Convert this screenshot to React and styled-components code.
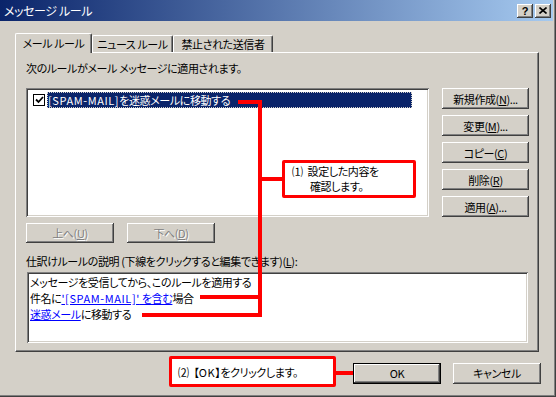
import styled, { createGlobalStyle } from "styled-components";

const GlobalStyle = createGlobalStyle`
  html, body {
    margin: 0;
    padding: 0;
    background: #d4d0c8;
  }
  body {
    font-family: "Noto Sans CJK JP", "Noto Sans", sans-serif;
    font-size: 11px;
    letter-spacing: -0.4px;
    font-feature-settings: "palt";
    color: #000;
  }
  * {
    box-sizing: border-box;
  }
`;

const raised = `
  box-shadow: inset -1px -1px #404040, inset 1px 1px #fff,
    inset -2px -2px #808080, inset 2px 2px #d4d0c8;
`;

const sunken = `
  box-shadow: inset 1px 1px #808080, inset -1px -1px #fff,
    inset 2px 2px #404040, inset -2px -2px #d4d0c8;
`;

const Window = styled.div`
  position: relative;
  width: 556px;
  height: 397px;
  background: #d4d0c8;
  padding: 0 3px 3px 0;
  box-shadow: inset -1px -1px #404040, inset -2px -2px #808080;
  display: flex;
  flex-direction: column;
  overflow: hidden;
`;

const TitleBar = styled.div`
  height: 21px;
  display: flex;
  align-items: center;
  padding: 0 2px 0 4px;
  background: linear-gradient(to right, #0a246a, #a6caf0);
  color: #fff;
  font-size: 12px;
  line-height: 14px;
`;

const TitleButtons = styled.div`
  margin-left: auto;
  display: flex;
  gap: 2px;
`;

const TitleButton = styled.div`
  width: 16px;
  height: 14px;
  background: #d4d0c8;
  ${raised}
  display: flex;
  align-items: center;
  justify-content: center;
  font-family: "Liberation Sans", sans-serif;
  font-weight: bold;
  font-size: 11px;
  letter-spacing: 0;
  line-height: 14px;
  color: #000;
`;

const Body = styled.div`
  padding: 12px 14px 0 15px;
`;

const Tabs = styled.div`
  display: flex;
  align-items: flex-end;
  height: 19px;
  position: relative;
  z-index: 1;
`;

const Tab = styled.div`
  width: ${(p) => p.$w}px;
  height: ${(p) => (p.$active ? 20 : 17)}px;
  margin-bottom: ${(p) => (p.$active ? -1 : 0)}px;
  background: #d4d0c8;
  border-top: 1px solid #fff;
  border-left: 1px solid #fff;
  border-right: 1px solid #404040;
  box-shadow: inset -1px 0 #808080;
  border-radius: 2px 2px 0 0;
  display: flex;
  align-items: center;
  justify-content: center;
  padding-bottom: ${(p) => (p.$active ? 2 : 0)}px;
  line-height: 14px;
  white-space: nowrap;
`;

const Panel = styled.div`
  height: 300px;
  border-top: 1px solid #fff;
  border-left: 1px solid #fff;
  border-right: 1px solid #404040;
  border-bottom: 1px solid #404040;
  box-shadow: inset -1px -1px #808080;
  padding: 8px 9px 0 10px;
`;

const Text = styled.div`
  line-height: 14px;
  margin-top: ${(p) => p.$mt || 0}px;
  white-space: nowrap;
`;

const Latin = styled.span`
  letter-spacing: 0.6px;
`;

const Num = styled.span`
  margin-right: 5px;
`;

const ListRow = styled.div`
  display: flex;
  gap: 13px;
  margin-top: 13px;
`;

const ListBox = styled.div`
  width: 404px;
  height: 129px;
  background: #fff;
  ${sunken}
  padding: 4px 2px 2px 2px;
`;

const ListItem = styled.div`
  display: flex;
  align-items: center;
  height: 16px;
  gap: 2px;
  padding-left: 5px;
`;

const Check = styled.div`
  width: 12px;
  height: 12px;
  border: 1px solid #000;
  background: #fff;
  display: flex;
  align-items: center;
  justify-content: center;
`;

const Selected = styled.div`
  width: 365px;
  height: 16px;
  background: #0a246a;
  color: #fff;
  line-height: 16px;
  padding-left: 1px;
  outline: 1px dotted #d4d0c8;
  outline-offset: -1px;
  white-space: nowrap;
`;

const ButtonColumn = styled.div`
  display: flex;
  flex-direction: column;
  gap: 6px;
`;

const Button = styled.div`
  width: ${(p) => p.$w || 87}px;
  height: ${(p) => p.$h || 21}px;
  background: #d4d0c8;
  ${raised}
  display: flex;
  align-items: center;
  justify-content: center;
  line-height: 14px;
  white-space: nowrap;
  color: ${(p) => (p.$disabled ? "#808080" : "#000")};
  text-shadow: ${(p) => (p.$disabled ? "1px 1px #fff" : "none")};
  ${(p) =>
    p.$default &&
    `
    box-shadow: inset 0 0 0 1px #000, inset -2px -2px #404040, inset 2px 2px #fff,
      inset -3px -3px #808080;
  `}
`;

const MoveRow = styled.div`
  display: flex;
  gap: 13px;
  margin-top: 6px;
`;

const DescBox = styled.div`
  margin-top: 4px;
  margin-left: 1px;
  width: 501px;
  height: 71px;
  background: #fff;
  ${sunken}
  padding: 2px 3px;
`;

const DescLine = styled.div`
  line-height: 16px;
  white-space: nowrap;
`;

const LinkText = styled.span`
  color: #0000ff;
  text-decoration: underline;
`;

const Footer = styled.div`
  flex: 1;
  display: flex;
  align-items: center;
  justify-content: flex-end;
  padding-right: 12px;
`;

const Callout = styled.div`
  background: #fff;
  border: 3px solid #ff0000;
  border-radius: 2px;
  white-space: nowrap;
`;

const OkCallout = styled(Callout)`
  width: 167px;
  height: 31px;
  display: flex;
  align-items: center;
  padding-left: 6px;
  margin-bottom: 3px;
  line-height: 14px;
`;

const Connector = styled.div`
  width: 17px;
  height: 4px;
  background: #ff0000;
`;

const FooterGap = styled.div`
  width: 12px;
`;

const CheckCallout = styled(Callout)`
  position: absolute;
  left: 282px;
  top: 160px;
  width: 134px;
  height: 38px;
  padding: 1px 0 0 7px;
  z-index: 3;
`;

const CalloutLine = styled.div`
  padding-left: ${(p) => p.$indent || 0}px;
  line-height: 15px;
`;

const Overlay = styled.svg`
  position: absolute;
  left: 0;
  top: 0;
  pointer-events: none;
  z-index: 2;
`;

export default function App() {
  return (
    <>
      <GlobalStyle />
      <Window>
        <TitleBar>
          メッセージ ルール
          <TitleButtons>
            <TitleButton>?</TitleButton>
            <TitleButton>
              <svg width="8" height="7" viewBox="0 0 8 7">
                <path d="M0.5 0.5 L7.5 6.5 M7.5 0.5 L0.5 6.5" stroke="#000" strokeWidth="1.6" />
              </svg>
            </TitleButton>
          </TitleButtons>
        </TitleBar>
        <Body>
          <Tabs>
            <Tab $w={77} $active>メール ルール</Tab>
            <Tab $w={81}>ニュース ルール</Tab>
            <Tab $w={100}>禁止された送信者</Tab>
          </Tabs>
          <Panel>
            <Text>次のルールがメール メッセージに適用されます。</Text>
            <ListRow>
              <ListBox>
                <ListItem>
                  <Check>
                    <svg width="9" height="8" viewBox="0 0 9 8">
                      <path d="M1 3.5 L3.5 6 L8 1" fill="none" stroke="#000" strokeWidth="1.8" />
                    </svg>
                  </Check>
                  <Selected>
                    <Latin>[SPAM-MAIL]</Latin>を迷惑メールに移動する
                  </Selected>
                </ListItem>
              </ListBox>
              <ButtonColumn>
                <Button>新規作成(<u>N</u>)...</Button>
                <Button>変更(<u>M</u>)...</Button>
                <Button>コピー(<u>C</u>)</Button>
                <Button>削除(<u>R</u>)</Button>
                <Button>適用(<u>A</u>)...</Button>
              </ButtonColumn>
            </ListRow>
            <MoveRow>
              <Button $w={88} $h={20} $disabled>上へ(<u>U</u>)</Button>
              <Button $w={88} $h={20} $disabled>下へ(<u>D</u>)</Button>
            </MoveRow>
            <Text $mt={11}>仕訳けルールの説明 (下線をクリックすると編集できます)(<u>L</u>):</Text>
            <DescBox>
              <DescLine>メッセージを受信してから、このルールを適用する</DescLine>
              <DescLine>
                件名に
                <LinkText>
                  <Latin>'[SPAM-MAIL]'</Latin> を含む
                </LinkText>
                場合
              </DescLine>
              <DescLine>
                <LinkText>迷惑メール</LinkText>に移動する
              </DescLine>
            </DescBox>
          </Panel>
        </Body>
        <Footer>
          <OkCallout>
            <Num>⑵</Num>【<Latin>OK</Latin>】をクリックします。
          </OkCallout>
          <Connector />
          <Button $w={88} $default>OK</Button>
          <FooterGap />
          <Button $w={88}>キャンセル</Button>
        </Footer>
        <Overlay width="556" height="397" viewBox="0 0 556 397">
          <g stroke="#ff0000" strokeWidth="4" fill="none">
            <path d="M238 102 H262" />
            <path d="M260 100 V317" />
            <path d="M260 179 H283" />
            <path d="M200 297 H262" />
            <path d="M142 315 H262" />
          </g>
        </Overlay>
        <CheckCallout>
          <CalloutLine>
            <Num>⑴</Num>設定した内容を
          </CalloutLine>
          <CalloutLine $indent={18}>確認します。</CalloutLine>
        </CheckCallout>
      </Window>
    </>
  );
}
